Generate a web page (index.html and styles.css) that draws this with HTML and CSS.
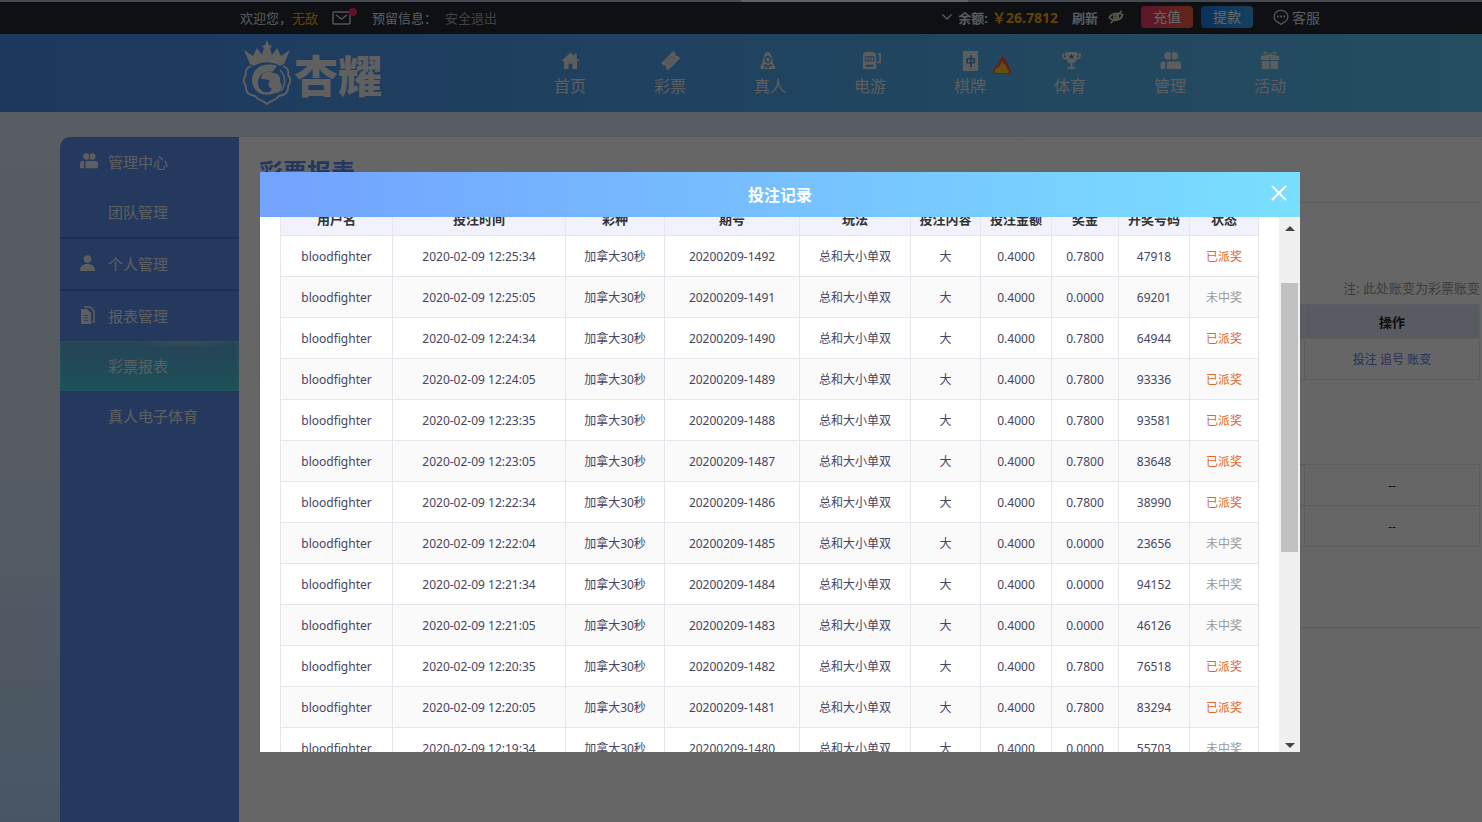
FILE: index.html
```html
<!DOCTYPE html>
<html lang="zh-CN">
<head>
    <meta charset="UTF-8">
    <meta name="viewport" content="width=device-width, initial-scale=1.0">
    <title>彩票报表</title>
    <link rel="stylesheet" href="styles.css">
</head>
<body>
    <div class="page">
        <div class="tab-strip"></div>

        <!-- 顶部信息栏 -->
        <div class="topbar">
            <div class="wrap topbar-inner">
                <span>欢迎您，<a href="#" class="gold">无敌</a></span>
                <a href="#" class="mail" aria-label="站内信">
                    <svg width="26" height="18" viewBox="0 0 26 18" fill="none" stroke="currentColor" stroke-width="1.500"><rect x="2" y="4" width="17" height="12" rx="1"/><path d="M5 7l5.500 4L16 7"/><circle cx="22" cy="4" r="4" fill="#f02d6b" stroke="none"/></svg>
                </a>
                <span class="reserve">预留信息：</span>
                <a href="#" class="logout">安全退出</a>
                <div class="account">
                    <svg width="10" height="8" viewBox="0 0 10 8" fill="none" stroke="currentColor" stroke-width="1.300"><path d="M0.500 1.500L5 6l4.500-4.500"/></svg>
                    <b class="balance-label">余额:</b>
                    <b class="gold balance">￥26.7812</b>
                    <button type="button" class="refresh">刷新</button>
                    <svg class="eye" width="16" height="16" viewBox="0 0 18 16" fill="none" stroke="currentColor" stroke-width="2"><path d="M1.500 9C3 4.500 10 2 16.500 5.500 15 11 8 14.500 1.500 9z"/><circle cx="9" cy="8" r="2.500"/><path d="M15.500 1L3 15"/></svg>
                    <button type="button" class="pill pill-red">充值</button>
                    <button type="button" class="pill pill-blue">提款</button>
                    <a href="#" class="service">
                        <svg width="16" height="16" viewBox="0 0 16 16" fill="none" stroke="currentColor" stroke-width="1.200"><path d="M6 13.800a6.800 6.400 0 1 1 4 0L8 15.500z"/><path d="M4 7.500h1.700M7.200 7.500h1.700M10.400 7.500h1.700" stroke-width="1.800"/></svg>
                        客服
                    </a>
                </div>
            </div>
        </div>

        <!-- 导航 -->
        <header class="header">
            <div class="wrap header-inner">
                <a href="#" class="logo">
                    <svg width="54" height="68" viewBox="0 0 54 68" fill="none" stroke="currentColor">
                        <path d="M4 11l9 6 4-8 5 7 2-7-2-2 3-1 2-5 2 5 3 1-2 2 2 7 5-7 4 8 9-6-6 14-4 2c-8-5-18-5-26 0l-4-2z" fill="currentColor" stroke="none"/>
                        <path d="M11 27c-5 2-6 5-5 9-3 3-3 8 0 11-1 6 3 9 9 10 3 5 8 4 12 8 4-4 9-3 12-8 6-1 10-4 9-10 3-3 3-8 0-11 1-4 0-7-5-9" stroke-width="1.800"/>
                        <path d="M37 27c-10-4-25 0-25 14 0 11 10 17 19 14-7-1-13-4-13-11 0-8 7-13 14-11z" fill="currentColor" stroke="none"/>
                        <path d="M21 40c1-8 8-9 12-6 7 0 8 6 7 9 4 5 1 11-5 11-3 2-8 2-12-1 6 1 10-1 8-4-3-1-3-5-1-7-3-2-6-2-9-2z" fill="currentColor" stroke="none"/>
                        <path d="M40 31c6 6 6 14 1 21" stroke-width="1.500"/>
                    </svg>
                    <span>杏耀</span>
                </a>
                <nav class="nav">
                    <a href="#"><svg width="22" height="22" viewBox="0 0 22 22" fill="currentColor"><path d="M11 2.500L1.500 11.500h2.700V20H9v-5.500h4V20h4.800v-8.500h2.700L17.500 8.700V4h-2.500v2.300z"/></svg>首页</a>
                    <a href="#"><svg width="22" height="22" viewBox="0 0 22 22" fill="currentColor"><g transform="rotate(-45 11 11)"><path d="M2 6h18v3.500a1.800 1.800 0 0 0 0 3.500v3.500H2V13a1.800 1.800 0 0 0 0-3.500z"/><path d="M7 8.500h8v5H7z" fill="none" stroke="#a9c4e0" stroke-width="0.800"/></g></svg>彩票</a>
                    <a href="#"><svg width="22" height="22" viewBox="0 0 22 22" fill="currentColor"><path d="M0.500 20c0-3 1-5 2-6C4 4 6 2 8 2s5 3 5.500 12c1 1 2.500 3 2.500 6z"/><path d="M5.500 8.500l3-2 2.500 2.500c0 3-1 4-2.800 4S5.500 11 5.500 8.500z" fill="none" stroke="#4f99de" stroke-width="1.400"/><path d="M4 16h2.500l2 2 2-2H13M4 18.500h2" fill="none" stroke="#4f99de" stroke-width="1.400"/></svg>真人</a>
                    <a href="#"><svg width="22" height="22" viewBox="0 0 22 22" fill="currentColor"><path d="M3 20V6c0-3 2-4 4-4h6c2 0 4 1 4 4v14z"/><path d="M5 6.500h10v5.500H5zM6 15.500h8v2H6z" fill="#4f9ddd"/><path d="M6 7.500h2v3.500H6zM9 7.500h2v3.500H9zM12 7.500h2v3.500h-2z"/><path d="M18 13h3V5M19 4h4" fill="none" stroke="currentColor" stroke-width="1.800"/></svg>电游</a>
                    <a href="#" class="hot"><svg width="22" height="22" viewBox="0 0 22 22" fill="currentColor"><path d="M3 1h16v21H3z"/><path d="M7.500 9h7.500v4.500H7.500zM11.500 5.500v12.500" fill="none" stroke="#3f88b8" stroke-width="1.500"/></svg>棋牌
                        <svg class="fire" width="20" height="22" viewBox="0 0 20 22"><path d="M10 0c1 5 4 5 5 9 3 6 5 9 3 12H2c-3-3 0-7 1-9l2 1C5 8 9 6 10 0z" fill="#ee5340"/><path d="M10 7c0 5 5 4 5 9 2 1 2 4 1 4H3c-2-2 0-4 1-6l2 1c0-3 3-4 4-8z" fill="#ffc229"/></svg></a>
                    <a href="#"><svg width="22" height="22" viewBox="0 0 22 22" fill="currentColor"><path d="M6 2h12v2h4c0 5-2 6-5 6-1 3-2 4-4 4v4h3v2H8v-2h3v-4c-2 0-3-1-4-4-3 0-5-1-5-6h4z"/><path d="M12 4l1 2h2l-1.500 1.500.5 2L12 8.500l-2 1 .5-2L9 6h2zM4 5.500h2v2.500C5 8 4 7 4 5.500zM18 5.500h2C20 7 19 8 18 8z" fill="#438fb8"/></svg>体育</a>
                    <a href="#"><svg width="22" height="22" viewBox="0 0 22 22" fill="currentColor"><circle cx="8.500" cy="6" r="4"/><circle cx="15" cy="6" r="4"/><path d="M0.500 20v-5c0-2 1-3 3-3h2v8zM7 20v-5c0-2 1-3 3-3h9c2 0 3 1 3 3v5z"/><path d="M11.800 1.500v9" stroke="#4ba5d5"/></svg>管理</a>
                    <a href="#"><svg width="22" height="22" viewBox="0 0 22 22" fill="currentColor"><path d="M1 6h9v4.500H1zM11 6h9v4.500h-9zM2 11.500h8V20H2zM11 11.500h8V20h-8z"/><path d="M10.500 6C8.500 2 4 1 4.500 4c.5 2 3 2 6 2 3 0 5.500 0 6-2 .5-3-4-2-6 2z" fill="none" stroke="currentColor" stroke-width="1.300"/></svg>活动</a>
                </nav>
            </div>
        </header>

        <div class="content">
            <aside class="sidebar">
                <div class="group">
                    <a href="#"><svg width="18" height="18" viewBox="0 0 22 22" fill="currentColor"><circle cx="8" cy="5.500" r="4"/><circle cx="15" cy="5.500" r="4"/><path d="M0 20v-6c0-2 1-3 3-3h2v9zM6.500 20v-6c0-2 1-3 3-3H19c2 0 3 1 3 3v6z"/><path d="M11.500 1v9" stroke="#5c90ee"/></svg>管理中心</a>
                    <a href="#" class="sub">团队管理</a>
                </div>
                <div class="group">
                    <a href="#"><svg width="18" height="18" viewBox="0 0 18 18" fill="currentColor"><circle cx="7.500" cy="5" r="3.800"/><path d="M0 17c0-5 3-7 7.500-7s7.500 2 7.500 7z"/></svg>个人管理</a>
                </div>
                <div class="group">
                    <a href="#"><svg width="18" height="18" viewBox="0 0 18 18" fill="currentColor"><path d="M1 3h6l4 4v11H1z"/><path d="M4 1h6l4 4v11h-2" fill="none" stroke="currentColor" stroke-width="1.600"/><path d="M4 9.500h4M4 12h4M4 14.500h4" stroke="#5c90ee" stroke-width="0.800"/></svg>报表管理</a>
                    <a href="#" class="sub active">彩票报表</a>
                    <a href="#" class="sub">真人电子体育</a>
                </div>
            </aside>
            <main class="main">
                <h1>彩票报表</h1>
                <p class="note">注: 此处账变为彩票账变</p>
                <table class="report">
                    <thead><tr><th></th><th class="op">操作</th></tr></thead>
                    <tbody><tr><td></td><td><a href="#">投注</a> <a href="#">追号</a> <a href="#">账变</a></td></tr></tbody>
                </table>
                <table class="report totals">
                    <tbody>
                        <tr><td></td><td class="op">--</td></tr>
                        <tr><td></td><td class="op">--</td></tr>
                    </tbody>
                </table>
            </main>
        </div>

        <!-- 投注记录弹窗 -->
        <div class="overlay">
            <div class="modal" role="dialog" aria-labelledby="modal-title">
                <div class="modal-head">
                    <h2 id="modal-title">投注记录</h2>
                    <button type="button" class="close" aria-label="关闭">
                        <svg width="16" height="16" viewBox="0 0 16 16" fill="none" stroke="currentColor" stroke-width="2"><path d="M1 1l14 14M15 1L1 15"/></svg>
                    </button>
                </div>
                <div class="modal-body">
                    <div class="scroll" id="records">
                        <table class="records">
                            <colgroup>
                                <col class="c-user"><col class="c-time"><col class="c-game"><col class="c-issue"><col class="c-play">
                                <col class="c-bet"><col class="c-amount"><col class="c-prize"><col class="c-code"><col class="c-state">
                            </colgroup>
                            <thead>
                                <tr><th>用户名</th><th>投注时间</th><th>彩种</th><th>期号</th><th>玩法</th><th>投注内容</th><th>投注金额</th><th>奖金</th><th>开奖号码</th><th>状态</th></tr>
                            </thead>
                            <tbody>
                                <tr><td>bloodfighter</td><td>2020-02-09 12:25:34</td><td>加拿大30秒</td><td>20200209-1492</td><td>总和大小单双</td><td>大</td><td>0.4000</td><td>0.7800</td><td>47918</td><td class="win">已派奖</td></tr>
                                <tr><td>bloodfighter</td><td>2020-02-09 12:25:05</td><td>加拿大30秒</td><td>20200209-1491</td><td>总和大小单双</td><td>大</td><td>0.4000</td><td>0.0000</td><td>69201</td><td class="lose">未中奖</td></tr>
                                <tr><td>bloodfighter</td><td>2020-02-09 12:24:34</td><td>加拿大30秒</td><td>20200209-1490</td><td>总和大小单双</td><td>大</td><td>0.4000</td><td>0.7800</td><td>64944</td><td class="win">已派奖</td></tr>
                                <tr><td>bloodfighter</td><td>2020-02-09 12:24:05</td><td>加拿大30秒</td><td>20200209-1489</td><td>总和大小单双</td><td>大</td><td>0.4000</td><td>0.7800</td><td>93336</td><td class="win">已派奖</td></tr>
                                <tr><td>bloodfighter</td><td>2020-02-09 12:23:35</td><td>加拿大30秒</td><td>20200209-1488</td><td>总和大小单双</td><td>大</td><td>0.4000</td><td>0.7800</td><td>93581</td><td class="win">已派奖</td></tr>
                                <tr><td>bloodfighter</td><td>2020-02-09 12:23:05</td><td>加拿大30秒</td><td>20200209-1487</td><td>总和大小单双</td><td>大</td><td>0.4000</td><td>0.7800</td><td>83648</td><td class="win">已派奖</td></tr>
                                <tr><td>bloodfighter</td><td>2020-02-09 12:22:34</td><td>加拿大30秒</td><td>20200209-1486</td><td>总和大小单双</td><td>大</td><td>0.4000</td><td>0.7800</td><td>38990</td><td class="win">已派奖</td></tr>
                                <tr><td>bloodfighter</td><td>2020-02-09 12:22:04</td><td>加拿大30秒</td><td>20200209-1485</td><td>总和大小单双</td><td>大</td><td>0.4000</td><td>0.0000</td><td>23656</td><td class="lose">未中奖</td></tr>
                                <tr><td>bloodfighter</td><td>2020-02-09 12:21:34</td><td>加拿大30秒</td><td>20200209-1484</td><td>总和大小单双</td><td>大</td><td>0.4000</td><td>0.0000</td><td>94152</td><td class="lose">未中奖</td></tr>
                                <tr><td>bloodfighter</td><td>2020-02-09 12:21:05</td><td>加拿大30秒</td><td>20200209-1483</td><td>总和大小单双</td><td>大</td><td>0.4000</td><td>0.0000</td><td>46126</td><td class="lose">未中奖</td></tr>
                                <tr><td>bloodfighter</td><td>2020-02-09 12:20:35</td><td>加拿大30秒</td><td>20200209-1482</td><td>总和大小单双</td><td>大</td><td>0.4000</td><td>0.7800</td><td>76518</td><td class="win">已派奖</td></tr>
                                <tr><td>bloodfighter</td><td>2020-02-09 12:20:05</td><td>加拿大30秒</td><td>20200209-1481</td><td>总和大小单双</td><td>大</td><td>0.4000</td><td>0.7800</td><td>83294</td><td class="win">已派奖</td></tr>
                                <tr><td>bloodfighter</td><td>2020-02-09 12:19:34</td><td>加拿大30秒</td><td>20200209-1480</td><td>总和大小单双</td><td>大</td><td>0.4000</td><td>0.0000</td><td>55703</td><td class="lose">未中奖</td></tr>
                            </tbody>
                        </table>
                    </div>
                    <div class="scrollbar">
                        <span class="arrow up"></span>
                        <span class="thumb"></span>
                        <span class="arrow down"></span>
                    </div>
                </div>
            </div>
        </div>
    </div>

    <script>
        // 恢复弹窗列表的滚动位置
        document.getElementById('records').scrollTop = 17;
    </script>
</body>
</html>
```
FILE: styles.css
```css
* {
    box-sizing: border-box;
}
html {
    overflow: hidden;
}
body {
    margin: 0;
    font-family: "Noto Sans", "Noto Sans CJK SC", sans-serif;
    font-size: 13px;
    color: #333;
}
a {
    color: inherit;
    text-decoration: none;
}
button {
    font: inherit;
    color: inherit;
    background: none;
    border: none;
    padding: 0;
    cursor: pointer;
}
h1, h2, p {
    margin: 0;
}
.page {
    position: relative;
    display: flex;
    flex-direction: column;
    min-width: 1560px;
    min-height: 100vh;
    background: linear-gradient(180deg, #dce6fa 0%, #d8e5f5 55%, #b4d8fa 100%);
}
.wrap {
    width: 1080px;
    margin: 0 auto;
}
.tab-strip {
    height: 2px;
    background: linear-gradient(90deg, #aab6cc 741px, #eef4ff 741px, #eef4ff 968px, #aab6cc 968px);
}

/* 顶部 */
.topbar {
    height: 32px;
    background: #232830;
    color: #dfe3ea;
}
.topbar-inner {
    display: flex;
    align-items: center;
    height: 30px;
}
.gold {
    color: #f0a818;
}
.mail {
    display: flex;
    margin-left: 13px;
    color: #cfd2d8;
}
.reserve {
    margin-left: 15px;
}
.logout {
    margin-left: 8px;
    color: #a3a6ac;
}
.account {
    display: flex;
    align-items: center;
    margin-left: auto;
}
.balance-label {
    margin-left: 6px;
}
.balance {
    margin-left: 4px;
    font-size: 14px;
}
.refresh {
    margin-left: 14px;
    font-weight: bold;
}
.eye {
    margin-left: 10px;
    color: #d8d2b8;
}
.pill {
    width: 52px;
    height: 22px;
    margin-left: 8px;
    border-radius: 4px;
    font-size: 14px;
    line-height: 22px;
    color: #fff;
}
.pill-red {
    margin-left: 17px;
    background: linear-gradient(90deg, #e8356d, #f26345);
}
.pill-blue {
    background: linear-gradient(90deg, #1a7be8, #38a4e8);
}
.service {
    display: flex;
    align-items: center;
    gap: 3px;
    margin-left: 20px;
    font-size: 14px;
}

/* 导航 */
.header {
    height: 78px;
    background: linear-gradient(90deg, #4b8eee, #52a8ee 50%, #5cc4f0);
    color: #fff;
}
.header-inner {
    display: flex;
    justify-content: space-between;
    height: 100%;
}
.logo {
    display: flex;
    align-items: center;
    color: #f0f0f0;
    font-size: 44px;
    font-weight: 900;
    line-height: 44px;
}
.logo span {
    padding-top: 6px;
}
.nav {
    display: flex;
    color: #e6e8ec;
}
.nav a {
    position: relative;
    display: flex;
    flex-direction: column;
    align-items: center;
    gap: 3px;
    width: 100px;
    padding-top: 16px;
    font-size: 16px;
    line-height: 24px;
}
.nav svg {
    width: 21px;
    height: 21px;
}
.nav .fire {
    position: absolute;
    left: 72px;
    top: 20px;
}

/* 主体 */
.content {
    display: flex;
    flex: 1;
    width: 1440px;
    margin: 25px auto 0;
}
.sidebar {
    width: 179px;
    border-radius: 10px 0 0 0;
    background: #5c90ee;
    color: #e8eaee;
    font-size: 15px;
}
.group + .group {
    border-top: 2px solid #4673cc;
}
.sidebar a {
    display: flex;
    align-items: center;
    gap: 10px;
    height: 50px;
    padding: 0 0 2px 20px;
}
.sidebar .sub {
    padding-left: 48px;
}
.sidebar .active {
    background: radial-gradient(ellipse 50px 8px at 70% 0, #98bcd0, transparent), linear-gradient(180deg, #60a8d8, #48c8dc);
    box-shadow: inset 0 0 4px #58dce0;
}
.main {
    flex: 1;
    padding: 16px 20px;
    background: #fff;
}
.main h1 {
    height: 50px;
    border-bottom: 1px solid #e4e4e4;
    color: #5a8dee;
    font-size: 24px;
    line-height: 38px;
}
.note {
    margin-top: 75px;
    color: #999;
    line-height: 20px;
    text-align: right;
}
.report {
    width: 100%;
    margin-top: 6px;
    border-collapse: collapse;
    text-align: center;
    font-size: 12px;
}
.report th, .report td {
    height: 41px;
    padding: 0;
    border: 1px solid #ececec;
}
.report th {
    height: 34px;
    background: #dde3f2;
    color: #222;
    font-size: 13px;
}
.report .op {
    width: 175px;
}
.report a {
    color: #5a7dee;
}
.totals {
    margin-top: 84px;
}
.main::after {
    content: "";
    display: block;
    margin-top: 80px;
    border-top: 1px solid #e4e4e4;
}

/* 弹窗 */
.overlay {
    position: absolute;
    inset: 0;
    padding-top: 172px;
    background: rgba(0, 0, 0, 0.6);
}
.modal {
    width: 1040px;
    margin: 0 auto;
    background: #fff;
}
.modal-head {
    position: relative;
    height: 45px;
    background: linear-gradient(90deg, #73a2ff, #7adfff);
    color: #fff;
    text-align: center;
}
.modal-head h2 {
    font-size: 16px;
    line-height: 46px;
}
.close {
    position: absolute;
    top: 13px;
    right: 13px;
    display: flex;
}
.modal-body {
    display: flex;
    height: 535px;
}
.scroll {
    flex: 1;
    padding: 0 20px;
    overflow: hidden;
}
.records {
    width: 100%;
    table-layout: fixed;
    border-collapse: collapse;
    text-align: center;
    font-size: 12px;
    color: #45455f;
}
.records th, .records td {
    height: 41px;
    padding: 0;
    border: 1px solid #e6e6ec;
    white-space: nowrap;
}
.records th {
    height: 35px;
    background: #f1f2fb;
    color: #333;
    font-size: 13px;
}
.records tbody tr:nth-child(even) {
    background: #fafafb;
}
.records .win {
    color: #e0662a;
}
.records .lose {
    color: #999;
}
.c-user { width: 112px; }
.c-time { width: 173px; }
.c-game { width: 99px; }
.c-issue { width: 135px; }
.c-play { width: 111px; }
.c-bet { width: 70px; }
.c-amount { width: 71px; }
.c-prize { width: 67px; }
.c-code { width: 71px; }
.c-state { width: 69px; }
.scrollbar {
    display: flex;
    flex-direction: column;
    align-items: center;
    width: 21px;
    padding: 9px 2px 4px;
    background: #f0f0f0;
}
.arrow {
    border: 5px solid transparent;
}
.arrow.up {
    border-top: none;
    border-bottom-color: #444;
}
.arrow.down {
    margin-top: auto;
    border-bottom: none;
    border-top-color: #444;
}
.thumb {
    width: 17px;
    height: 269px;
    margin-top: 52px;
    background: #c1c1c1;
}
```
